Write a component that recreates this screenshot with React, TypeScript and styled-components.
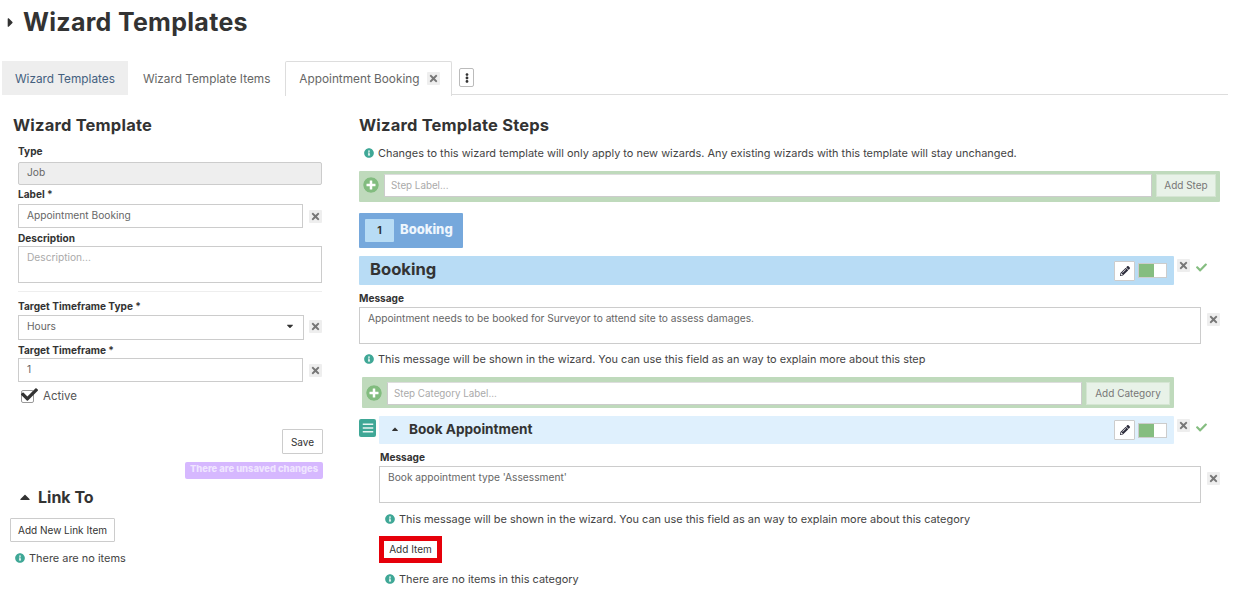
import React from "react";
import styled, { createGlobalStyle } from "styled-components";
import {
  FaBars,
  FaCaretDown,
  FaCaretRight,
  FaCaretUp,
  FaCheck,
  FaEllipsisV,
  FaInfoCircle,
  FaPencilAlt,
  FaPlusCircle,
  FaTimes,
} from "react-icons/fa";

const GlobalStyle = createGlobalStyle`
  html, body {
    margin: 0;
    padding: 0;
    background: #fff;
    overflow: hidden;
  }
  body {
    font-family: Inter, "Noto Sans", "Liberation Sans", sans-serif;
    color: #333;
  }
  * {
    box-sizing: border-box;
  }
`;

const Page = styled.div`
  width: 1238px;
  height: 612px;
`;

const PageHeader = styled.div`
  display: flex;
  align-items: center;
  height: 61px;
  padding: 0 0 16px 3px;
  gap: 5px;
  color: #333;
  font-size: 15px;
`;

const PageTitle = styled.h1`
  margin: 0;
  font-size: 25px;
  line-height: 45px;
  font-weight: 700;
  color: #333;
  letter-spacing: 0.3px;
`;

const TabBar = styled.div`
  display: flex;
  align-items: flex-start;
  height: 34px;
  margin: 0 10px 0 2px;
  border-bottom: 1px solid #ddd;
`;

const Tab = styled.div<{ $variant?: "selected" | "open" }>`
  display: flex;
  align-items: center;
  gap: 8px;
  height: 34px;
  padding: 1px ${(p) => (p.$variant ? 13 : 15)}px 0;
  font-size: 11.8px;
  color: ${(p) => (p.$variant === "selected" ? "#44607f" : "#666")};
  background: ${(p) => (p.$variant === "selected" ? "#eee" : "#fff")};
  border: ${(p) => (p.$variant === "open" ? "1px solid #ddd" : "none")};
  border-bottom: none;
  border-radius: ${(p) => (p.$variant === "open" ? "2px 2px 0 0" : "0")};
  ${(p) =>
    p.$variant === "open"
      ? "height: 35px; padding: 0 11px 1px 13px; background: #fff;"
      : ""}
`;

const KebabButton = styled.button`
  display: flex;
  align-items: center;
  justify-content: center;
  width: 15px;
  height: 19px;
  margin: 7px 0 0 7px;
  padding: 0;
  background: #fff;
  border: 1px solid #bbb;
  border-radius: 2px;
  color: #333;
  font-size: 10px;
`;

const Columns = styled.div`
  display: grid;
  grid-template-columns: 349px 861px;
  padding: 20px 0 0 10px;
`;

const LeftColumn = styled.div`
  display: flex;
  flex-direction: column;
`;

const RightColumn = styled.div`
  display: flex;
  flex-direction: column;
`;

const SectionTitle = styled.h2<{ $indent?: number }>`
  height: 20px;
  margin: 0;
  padding-left: ${(p) => p.$indent ?? 0}px;
  font-size: 16.5px;
  line-height: 20px;
  font-weight: 700;
  color: #333;
  letter-spacing: 0.2px;
`;

const FormBody = styled.div`
  display: flex;
  flex-direction: column;
  width: 312px;
  padding: 9px 0 0 8px;
`;

const Label = styled.label<{ $top?: number; $left?: number }>`
  display: block;
  height: 14px;
  margin-top: ${(p) => p.$top ?? 0}px;
  margin-left: ${(p) => p.$left ?? 0}px;
  font-size: 10.1px;
  line-height: 14px;
  font-weight: 700;
  color: #333;
`;

const FieldRow = styled.div<{ $top?: number; $gap?: number; $left?: number }>`
  display: flex;
  align-items: flex-start;
  gap: ${(p) => p.$gap ?? 6}px;
  margin-top: ${(p) => p.$top ?? 0}px;
  padding-left: ${(p) => p.$left ?? 0}px;
`;

const TextBox = styled.div<{
  $height: number;
  $disabled?: boolean;
  $placeholder?: boolean;
  $multiline?: boolean;
}>`
  display: flex;
  align-items: ${(p) => (p.$multiline ? "flex-start" : "center")};
  justify-content: space-between;
  flex: 1;
  min-width: 0;
  height: ${(p) => p.$height}px;
  padding: ${(p) =>
    p.$multiline ? "3px 8px" : p.$height % 2 ? "0 8px 3px" : "0 8px 2px"};
  font-size: 10.2px;
  line-height: 14px;
  color: ${(p) => (p.$placeholder ? "#aaa" : "#666")};
  background: ${(p) => (p.$disabled ? "#eee" : "#fff")};
  border: 1px solid #ccc;
  ${(p) => (p.$disabled ? "border-radius: 2px;" : "")}
`;

const ClearButton = styled.span<{ $top?: number }>`
  flex: none;
  display: flex;
  align-items: center;
  justify-content: center;
  width: 13px;
  height: 13px;
  margin-top: ${(p) => p.$top ?? 0}px;
  background: #eee;
  border-radius: 1px;
  color: #777;
  font-size: 11px;
`;

const Divider = styled.hr`
  width: 100%;
  height: 1px;
  margin: 8px 0 0;
  border: none;
  background: #eee;
`;

const CheckRow = styled.div`
  display: flex;
  align-items: center;
  gap: 9px;
  height: 14px;
  margin: 7px 0 0 3px;
  font-size: 11.5px;
  color: #555;
`;

const CheckBox = styled.span`
  position: relative;
  display: block;
  width: 13px;
  height: 13px;
  border: 1px solid #999;
  border-radius: 2px;
  background: #fff;
`;

const CheckMark = styled.span`
  position: absolute;
  left: -1px;
  top: -5px;
  font-size: 17px;
  line-height: 17px;
  color: #333;
`;

const ActionRow = styled.div<{ $top: number }>`
  display: flex;
  justify-content: flex-end;
  margin: ${(p) => p.$top}px -1px 0 0;
`;

const PlainButton = styled.button<{ $width?: number }>`
  width: ${(p) => (p.$width ? `${p.$width}px` : "auto")};
  height: 25px;
  padding: 0;
  font-family: inherit;
  font-size: 10px;
  color: #333;
  background: #fff;
  border: 1px solid #ccc;
  border-radius: 1px;
`;

const UnsavedBadge = styled.div`
  width: 138px;
  height: 17px;
  padding-top: 1px;
  font-size: 9.4px;
  line-height: 12px;
  font-weight: 800;
  text-align: center;
  color: #f0e6ff;
  background: #d6b8ff;
  border-radius: 2px;
`;

const CollapseTitle = styled.div`
  display: flex;
  align-items: center;
  gap: 5px;
  height: 18px;
  margin: 9px 0 0 7px;
  font-size: 16px;
  font-weight: 700;
  color: #333;
`;

const LinkButton = styled(PlainButton)`
  width: 105px;
  height: 24px;
  margin-top: 12px;
  display: block;
`;

const InfoRow = styled.div<{ $top?: number; $left?: number }>`
  display: flex;
  align-items: center;
  gap: 4px;
  height: 14px;
  margin-top: ${(p) => p.$top ?? 0}px;
  margin-left: ${(p) => p.$left ?? 0}px;
  font-size: 10.95px;
  color: #444;
  white-space: nowrap;
  svg {
    flex: none;
    color: #3fa796;
    font-size: 10px;
  }
`;

const AddBar = styled.div<{
  $top: number;
  $padTop: number;
  $left?: number;
  $width?: number;
}>`
  display: flex;
  align-items: flex-start;
  gap: 4px;
  height: 31px;
  width: ${(p) => p.$width ?? 861}px;
  margin-top: ${(p) => p.$top}px;
  margin-left: ${(p) => p.$left ?? 0}px;
  padding: ${(p) => p.$padTop}px 4px 0;
  background: #bfdabc;
  border-radius: 1px;
`;

const AddIcon = styled.span`
  flex: none;
  display: flex;
  align-items: center;
  width: 16px;
  height: 22px;
  margin-right: 1px;
  color: #82bc7f;
  font-size: 16px;
  svg {
    background: radial-gradient(circle, #fff 45%, transparent 46%);
    border-radius: 50%;
  }
`;

const BarInput = styled.div`
  flex: 1;
  display: flex;
  align-items: center;
  height: 23px;
  padding: 0 6px;
  font-size: 9.8px;
  color: #aaa;
  background: #fff;
  border: 1px solid #ccc;
  border-top-color: #ddd;
`;

const BarButton = styled.div<{ $width: number }>`
  flex: none;
  display: flex;
  align-items: center;
  justify-content: center;
  width: ${(p) => p.$width}px;
  height: 23px;
  padding-bottom: 2px;
  font-size: 10px;
  color: #777;
  background: #e8f2e8;
  border: 1px solid #d5e5d3;
`;

const StepTab = styled.div`
  display: flex;
  align-items: center;
  gap: 6px;
  width: 104px;
  height: 35px;
  margin-top: 11px;
  padding: 0 6px;
  background: #76a8dc;
  border-radius: 1px;
`;

const StepTabLabel = styled.span`
  margin-top: -4px;
  font-size: 13px;
  font-weight: 800;
  color: #eef6fd;
`;

const StepNumber = styled.span`
  display: flex;
  align-items: center;
  justify-content: center;
  width: 29px;
  height: 23px;
  font-size: 10.5px;
  font-weight: 700;
  color: #333;
  background: #b8dcf5;
  border-radius: 1px;
`;

const HeaderRow = styled.div<{ $top: number }>`
  display: flex;
  align-items: flex-start;
  margin-top: ${(p) => p.$top}px;
`;

const StepBar = styled.div<{ $tone: "step" | "category"; $height: number }>`
  flex: 1;
  display: flex;
  align-items: center;
  justify-content: space-between;
  height: ${(p) => p.$height}px;
  padding: 0 7px 0 11px;
  background: ${(p) => (p.$tone === "step" ? "#b8dcf5" : "#dff0fd")};
  border-radius: 1px;
`;

const StepName = styled.div`
  margin-top: -3px;
  font-size: 16.6px;
  font-weight: 700;
  color: #333;
`;

const CategoryName = styled.div`
  display: flex;
  align-items: center;
  gap: 9px;
  margin-top: -3px;
  font-size: 13.6px;
  font-weight: 700;
  color: #333;
`;

const BarControls = styled.div`
  display: flex;
  align-items: center;
  gap: 3px;
`;

const EditButton = styled.span`
  display: flex;
  align-items: center;
  justify-content: center;
  width: 21px;
  height: 20px;
  font-size: 10px;
  color: #2b2b3a;
  background: #fff;
  border: 1px solid #ccc;
  border-radius: 1px;
`;

const Toggle = styled.span`
  display: flex;
  justify-content: flex-start;
  width: 29px;
  height: 15px;
  background: #fff;
  border: 1px solid #ccc;
`;

const ToggleKnob = styled.span`
  display: block;
  width: 15px;
  height: 100%;
  background: #85bd80;
`;

const SideActions = styled.div`
  flex: none;
  display: flex;
  align-items: flex-start;
  gap: 6px;
  width: 46px;
  padding: 3px 0 0 3px;
  color: #85bd80;
  font-size: 11px;
  > svg {
    margin-top: 3px;
  }
`;

const MenuHandle = styled.span`
  flex: none;
  display: flex;
  align-items: center;
  justify-content: center;
  width: 17px;
  height: 18px;
  margin: 3px 3px 0 0;
  color: #e8f5f2;
  font-size: 12px;
  background: #3fa796;
  border-radius: 2px;
`;

const AddItemButton = styled.button`
  display: block;
  width: 63px;
  height: 27px;
  margin: 10px 0 0 20px;
  padding: 0 0 2px;
  font-family: inherit;
  font-size: 10px;
  color: #333;
  background: #fff;
  border: 5px solid #e6000a;
`;

const Info = ({
  text,
  top,
  left,
}: {
  text: string;
  top?: number;
  left?: number;
}) => (
  <InfoRow $top={top} $left={left}>
    <FaInfoCircle />
    {text}
  </InfoRow>
);

const Clear = ({ top }: { top?: number }) => (
  <ClearButton $top={top}>
    <FaTimes />
  </ClearButton>
);

const Controls = () => (
  <BarControls>
    <EditButton>
      <FaPencilAlt />
    </EditButton>
    <Toggle>
      <ToggleKnob />
    </Toggle>
  </BarControls>
);

const App = () => {
  return (
    <Page>
      <GlobalStyle />
      <PageHeader>
        <FaCaretRight />
        <PageTitle>Wizard Templates</PageTitle>
      </PageHeader>

      <TabBar>
        <Tab $variant="selected">Wizard Templates</Tab>
        <Tab>Wizard Template Items</Tab>
        <Tab $variant="open">
          Appointment Booking
          <Clear />
        </Tab>
        <KebabButton>
          <FaEllipsisV />
        </KebabButton>
      </TabBar>

      <Columns>
        <LeftColumn>
          <SectionTitle $indent={3}>Wizard Template</SectionTitle>
          <FormBody>
            <Label>Type</Label>
            <FieldRow $top={4}>
              <TextBox $height={23} $disabled>
                Job
              </TextBox>
            </FieldRow>
            <Label $top={2}>Label *</Label>
            <FieldRow $top={3}>
              <TextBox $height={24}>Appointment Booking</TextBox>
              <Clear top={6} />
            </FieldRow>
            <Label $top={3}>Description</Label>
            <FieldRow $top={1}>
              <TextBox $height={37} $placeholder $multiline>
                Description...
              </TextBox>
            </FieldRow>
            <Divider />
            <Label $top={7}>Target Timeframe Type *</Label>
            <FieldRow $top={2} $gap={5}>
              <TextBox $height={25}>
                Hours
                <FaCaretDown color="#333" size={10} />
              </TextBox>
              <Clear top={5} />
            </FieldRow>
            <Label $top={3}>Target Timeframe *</Label>
            <FieldRow $top={1}>
              <TextBox $height={24}>1</TextBox>
              <Clear top={6} />
            </FieldRow>
            <CheckRow>
              <CheckBox>
                <CheckMark>
                  <FaCheck />
                </CheckMark>
              </CheckBox>
              Active
            </CheckRow>
            <ActionRow $top={26}>
              <PlainButton $width={41}>Save</PlainButton>
            </ActionRow>
            <ActionRow $top={8}>
              <UnsavedBadge>There are unsaved changes</UnsavedBadge>
            </ActionRow>
          </FormBody>
          <CollapseTitle>
            <FaCaretUp />
            Link To
          </CollapseTitle>
          <LinkButton>Add New Link Item</LinkButton>
          <Info text="There are no items" top={9} left={5} />
        </LeftColumn>

        <RightColumn>
          <SectionTitle>Wizard Template Steps</SectionTitle>
          <Info
            text="Changes to this wizard template will only apply to new wizards. Any existing wizards with this template will stay unchanged."
            top={11}
            left={5}
          />
          <AddBar $top={11} $padTop={3}>
            <AddIcon>
              <FaPlusCircle />
            </AddIcon>
            <BarInput>Step Label...</BarInput>
            <BarButton $width={60}>Add Step</BarButton>
          </AddBar>

          <StepTab>
            <StepNumber>1</StepNumber>
            <StepTabLabel>Booking</StepTabLabel>
          </StepTab>

          <HeaderRow $top={8}>
            <StepBar $tone="step" $height={29}>
              <StepName>Booking</StepName>
              <Controls />
            </StepBar>
            <SideActions>
              <Clear />
              <FaCheck />
            </SideActions>
          </HeaderRow>

          <Label $top={6}>Message</Label>
          <FieldRow $top={2}>
            <TextBox $height={37} $multiline>
              Appointment needs to be booked for Surveyor to attend site to assess damages.
            </TextBox>
            <Clear top={6} />
          </FieldRow>
          <Info
            text="This message will be shown in the wizard. You can use this field as an way to explain more about this step"
            top={8}
            left={5}
          />
          <AddBar $top={11} $padTop={5} $left={3} $width={812}>
            <AddIcon>
              <FaPlusCircle />
            </AddIcon>
            <BarInput>Step Category Label...</BarInput>
            <BarButton $width={84}>Add Category</BarButton>
          </AddBar>

          <HeaderRow $top={8}>
            <MenuHandle>
              <FaBars />
            </MenuHandle>
            <StepBar $tone="category" $height={28}>
              <CategoryName>
                <FaCaretUp size={10} />
                Book Appointment
              </CategoryName>
              <Controls />
            </StepBar>
            <SideActions>
              <Clear />
              <FaCheck />
            </SideActions>
          </HeaderRow>

          <Label $top={6} $left={21}>
            Message
          </Label>
          <FieldRow $top={2} $left={20}>
            <TextBox $height={37} $multiline>
              Book appointment type 'Assessment'
            </TextBox>
            <Clear top={6} />
          </FieldRow>
          <Info
            text="This message will be shown in the wizard. You can use this field as an way to explain more about this category"
            top={9}
            left={26}
          />
          <AddItemButton>Add Item</AddItemButton>
          <Info text="There are no items in this category" top={9} left={26} />
        </RightColumn>
      </Columns>
    </Page>
  );
};

export default App;
